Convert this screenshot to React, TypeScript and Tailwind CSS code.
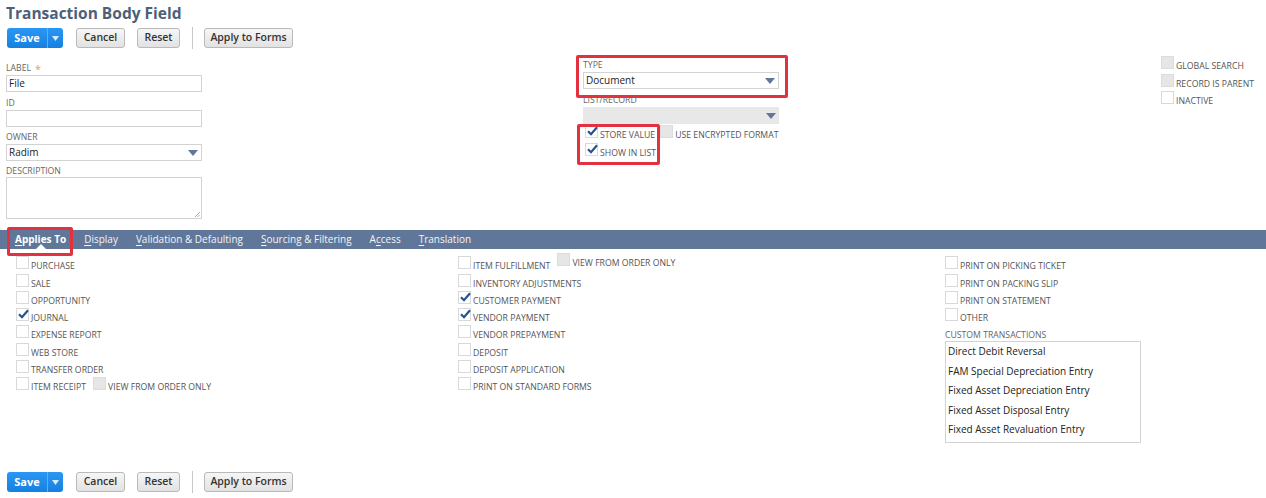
import React from "react";

const font = { fontFamily: '"Open Sans", "Liberation Sans", sans-serif' };

function Arrow({ className = "" }: { className?: string }) {
  return (
    <svg width="10" height="6" viewBox="0 0 10 6" className={className}>
      <path d="M0 0 H10 L5 6 Z" fill="#607799" />
    </svg>
  );
}

function Check() {
  return (
    <svg width="11" height="10" viewBox="0 0 11 10" className="absolute left-[1px] top-[0px]">
      <path d="M1 5.2 L4 8.2 L10 1.2" stroke="#24538c" strokeWidth="2.2" fill="none" />
    </svg>
  );
}

function Box({ checked = false, disabled = false }: { checked?: boolean; disabled?: boolean }) {
  return (
    <span
      className={`relative inline-block h-[13px] w-[13px] shrink-0 border ${
        disabled ? "border-[#dcdcdc] bg-[#e6e6e6]" : "border-[#d9d9d9] bg-white"
      }`}
    >
      {checked && <Check />}
    </span>
  );
}

function CheckRow({
  label,
  checked,
  disabled,
  extra,
}: {
  label: string;
  checked?: boolean;
  disabled?: boolean;
  extra?: React.ReactNode;
}) {
  return (
    <div className="flex h-[17.3px] items-end whitespace-nowrap">
      <div className="flex items-end gap-[2px]">
        <Box checked={checked} disabled={disabled} />
        <span className="relative top-[3px] text-[8.7px] leading-[11px] text-[#555]">{label}</span>
      </div>
      {extra}
    </div>
  );
}

function FieldLabel({ children }: { children: React.ReactNode }) {
  return <div className="text-[8.7px] leading-[11px] text-[#666]">{children}</div>;
}

function Buttons() {
  return (
    <div className="flex items-center pl-[7px]">
      <div className="flex h-[20px] w-[56px] items-center rounded-[3px] bg-gradient-to-b from-[#2a97f4] to-[#1680e0] text-white">
        <span className="w-[40px] text-center text-[11px] font-bold">Save</span>
        <span className="h-full w-px bg-[#5fb0f5]" />
        <span className="flex flex-1 justify-center">
          <svg width="7" height="5" viewBox="0 0 7 5">
            <path d="M0 0 H7 L3.5 5 Z" fill="#d8ebfc" />
          </svg>
        </span>
      </div>
      <button className="ml-[13px] h-[20px] w-[49px] rounded-[3px] border border-[#b9b9b9] bg-gradient-to-b from-[#f6f6f6] to-[#e2e2e2] text-[10.5px] font-semibold text-[#333]">
        Cancel
      </button>
      <button className="ml-[12px] h-[20px] w-[43px] rounded-[3px] border border-[#b9b9b9] bg-gradient-to-b from-[#f6f6f6] to-[#e2e2e2] text-[10.5px] font-semibold text-[#333]">
        Reset
      </button>
      <span className="ml-[12px] h-[22px] w-px bg-[#c8c8c8]" />
      <button className="ml-[11px] h-[20px] w-[89px] rounded-[3px] border border-[#b9b9b9] bg-gradient-to-b from-[#f6f6f6] to-[#e2e2e2] text-[10.5px] font-semibold text-[#333]">
        Apply to Forms
      </button>
    </div>
  );
}

function Tab({ label, keyIndex, active }: { label: string; keyIndex: number; active?: boolean }) {
  return (
    <div className="relative flex h-full items-center">
      <span className={`text-[10px] ${active ? "font-bold text-white" : "text-[#f2f5f9]"}`}>
        {label.slice(0, keyIndex)}
        <span className="underline underline-offset-2">{label[keyIndex]}</span>
        {label.slice(keyIndex + 1)}
      </span>
      {active && (
        <span className="absolute bottom-0 left-1/2 h-0 w-0 -translate-x-1/2 border-x-[5px] border-b-[5px] border-x-transparent border-b-white" />
      )}
    </div>
  );
}

export default function App() {
  const customTx = [
    "Direct Debit Reversal",
    "FAM Special Depreciation Entry",
    "Fixed Asset Depreciation Entry",
    "Fixed Asset Disposal Entry",
    "Fixed Asset Revaluation Entry",
  ];

  return (
    <div style={font} className="relative h-[498px] w-[1266px] overflow-hidden bg-white">
      {/* header */}
      <h1 className="pl-[6px] pt-[2px] text-[15.5px] font-bold leading-[22px] text-[#4d5f79]">
        Transaction Body Field
      </h1>
      <div className="mt-[3px]">
        <Buttons />
      </div>

      {/* main form */}
      <div className="mt-[14px] grid grid-cols-[577px_578px_1fr] pl-[6px]">
        <div className="w-[196px]">
          <div className="flex items-center gap-[4px]">
            <FieldLabel>LABEL</FieldLabel>
            <span className="text-[11px] leading-[11px] text-[#e8a33d]">*</span>
          </div>
          <div className="mt-[1px] flex h-[17px] items-center border border-[#d3d3d3] px-[2px] text-[10px] text-[#222]">
            File
          </div>
          <div className="mt-[6px]">
            <FieldLabel>ID</FieldLabel>
          </div>
          <div className="mt-[1px] h-[17px] border border-[#d3d3d3]" />
          <div className="mt-[5px]">
            <FieldLabel>OWNER</FieldLabel>
          </div>
          <div className="mt-[1px] flex h-[17px] items-center justify-between border border-[#d3d3d3] pl-[2px] pr-[3px] text-[10px] text-[#222]">
            Radim
            <Arrow />
          </div>
          <div className="mt-[5px]">
            <FieldLabel>DESCRIPTION</FieldLabel>
          </div>
          <div className="relative mt-[0px] h-[42px] border border-[#d3d3d3]">
            <svg width="5" height="5" viewBox="0 0 5 5" className="absolute bottom-[1px] right-[1px]">
              <path d="M0 5 L5 0 M2.5 5 L5 2.5" stroke="#999" strokeWidth="0.8" />
            </svg>
          </div>
        </div>

        <div className="relative w-[196px]">
          <div className="mt-[-3px]">
            <FieldLabel>TYPE</FieldLabel>
          </div>
          <div className="mt-[1px] flex h-[17px] items-center justify-between border border-[#d3d3d3] pl-[2px] pr-[3px] text-[10px] text-[#222]">
            Document
            <Arrow />
          </div>
          <div className="mt-[6px]">
            <FieldLabel>LIST/RECORD</FieldLabel>
          </div>
          <div className="mt-[1px] flex h-[17px] items-center justify-end bg-[#e8e8e8] pr-[3px]">
            <Arrow />
          </div>
          <div className="mt-[-3px] pl-[2px]">
            <CheckRow
              label="STORE VALUE"
              checked
              extra={
                <div className="ml-[5px] flex items-end gap-[2px]">
                  <Box disabled />
                  <span className="relative top-[3px] text-[8.7px] leading-[11px] text-[#555]">
                    USE ENCRYPTED FORMAT
                  </span>
                </div>
              }
            />
            <CheckRow label="SHOW IN LIST" checked />
          </div>
        </div>

        <div className="mt-[-11px]">
          <CheckRow label="GLOBAL SEARCH" disabled />
          <CheckRow label="RECORD IS PARENT" disabled />
          <CheckRow label="INACTIVE" />
        </div>
      </div>

      {/* tab bar */}
      <div className="mt-[11px] flex h-[19px] items-stretch gap-[18px] bg-[#607799] pl-[15px]">
        <Tab label="Applies To" keyIndex={0} active />
        <Tab label="Display" keyIndex={0} />
        <Tab label="Validation & Defaulting" keyIndex={0} />
        <Tab label="Sourcing & Filtering" keyIndex={0} />
        <Tab label="Access" keyIndex={1} />
        <Tab label="Translation" keyIndex={0} />
      </div>

      {/* tab content */}
      <div className="mt-[3px] grid grid-cols-[442px_487px_1fr] pl-[16px]">
        <div>
          <CheckRow label="PURCHASE" />
          <CheckRow label="SALE" />
          <CheckRow label="OPPORTUNITY" />
          <CheckRow label="JOURNAL" checked />
          <CheckRow label="EXPENSE REPORT" />
          <CheckRow label="WEB STORE" />
          <CheckRow label="TRANSFER ORDER" />
          <CheckRow
            label="ITEM RECEIPT"
            extra={
              <div className="ml-[7px] flex items-end gap-[2px]">
                <Box disabled />
                <span className="relative top-[3px] text-[8.7px] leading-[11px] text-[#555]">
                  VIEW FROM ORDER ONLY
                </span>
              </div>
            }
          />
        </div>
        <div>
          <CheckRow
            label="ITEM FULFILLMENT"
            extra={
              <div className="relative -top-[3px] ml-[7px] flex items-end gap-[2px]">
                <Box disabled />
                <span className="relative top-[3px] text-[8.7px] leading-[11px] text-[#555]">
                  VIEW FROM ORDER ONLY
                </span>
              </div>
            }
          />
          <CheckRow label="INVENTORY ADJUSTMENTS" />
          <CheckRow label="CUSTOMER PAYMENT" checked />
          <CheckRow label="VENDOR PAYMENT" checked />
          <CheckRow label="VENDOR PREPAYMENT" />
          <CheckRow label="DEPOSIT" />
          <CheckRow label="DEPOSIT APPLICATION" />
          <CheckRow label="PRINT ON STANDARD FORMS" />
        </div>
        <div>
          <CheckRow label="PRINT ON PICKING TICKET" />
          <CheckRow label="PRINT ON PACKING SLIP" />
          <CheckRow label="PRINT ON STATEMENT" />
          <CheckRow label="OTHER" />
          <div className="mt-[9px]">
            <FieldLabel>CUSTOM TRANSACTIONS</FieldLabel>
          </div>
          <div className="h-[102px] w-[196px] border border-[#d3d3d3] pl-[2px]">
            {customTx.map((t) => (
              <div key={t} className="flex h-[19.5px] items-center text-[10px] text-[#222]">
                {t}
              </div>
            ))}
          </div>
        </div>
      </div>

      {/* footer */}
      <div className="absolute left-0 top-[471px]">
        <Buttons />
      </div>

      {/* highlight frames */}
      <div className="pointer-events-none absolute left-[576px] top-[55px] h-[43px] w-[212px] rounded-[2px] border-[3px] border-[#e2323f]" />
      <div className="pointer-events-none absolute left-[577px] top-[124px] h-[41px] w-[83px] rounded-[2px] border-[3px] border-[#e2323f]" />
      <div className="pointer-events-none absolute left-[7px] top-[227px] h-[29px] w-[66px] rounded-[2px] border-[3px] border-[#e2323f]" />
    </div>
  );
}
